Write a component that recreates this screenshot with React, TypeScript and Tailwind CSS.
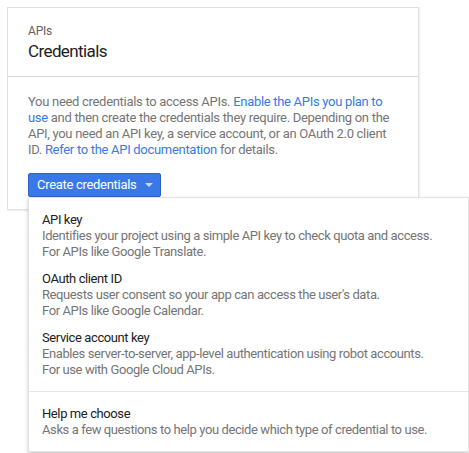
import React from "react";

const items = [
  {
    title: "API key",
    lines: [
      "Identifies your project using a simple API key to check quota and access.",
      "For APIs like Google Translate.",
    ],
  },
  {
    title: "OAuth client ID",
    lines: [
      "Requests user consent so your app can access the user's data.",
      "For APIs like Google Calendar.",
    ],
  },
  {
    title: "Service account key",
    lines: [
      "Enables server-to-server, app-level authentication using robot accounts.",
      "For use with Google Cloud APIs.",
    ],
  },
];

function MenuItem({ title, lines }: { title: string; lines: string[] }) {
  return (
    <div className="px-[13px] py-[5px] cursor-pointer whitespace-nowrap tracking-[-0.4px]">
      <div className="text-[13px] leading-[17px] text-[#212121]">{title}</div>
      {lines.map((l) => (
        <div key={l} className="text-[13px] leading-4 text-[#757575]">
          {l}
        </div>
      ))}
    </div>
  );
}

export default function App() {
  return (
    <div
      className="relative w-[469px] h-[453px] bg-white pt-[7px] pl-[7px]"
      style={{ fontFamily: "Roboto, 'Noto Sans', Arial, sans-serif" }}
    >
      <div className="w-[412px] border border-[#e0e0e0] bg-white shadow-[1px_1px_2px_rgba(0,0,0,0.08)]">
        <div className="h-[69px] border-b border-[#dadada] px-5 pt-[15px]">
          <div className="text-[12px] leading-4 text-[#616161] tracking-[-0.2px]">APIs</div>
          <div className="text-[17px] leading-6 text-[#212121] tracking-[-0.6px]">Credentials</div>
        </div>
        <div className="px-5 pt-[17px] pb-3">
          <p className="text-[13px] leading-4 text-[#757575] tracking-[-0.3px] pr-[4px]">
            You need credentials to access APIs.{" "}
            <a className="text-[#3b78e7]">Enable the APIs you plan to use</a> and then create the
            credentials they require. Depending on the API, you need an API key, a service
            account, or an OAuth 2.0 client ID.{" "}
            <a className="text-[#3b78e7]">Refer to the API documentation</a> for details.
          </p>
          <div className="relative mt-[15px]">
            <button className="flex items-center h-6 w-[133px] pl-2 bg-[#3b78e7] border border-[#2f62c9] rounded-[2px] text-white text-[13px] tracking-[-0.3px]">
              Create credentials
              <svg width="8" height="4" viewBox="0 0 8 4" className="ml-[9px]">
                <path d="M0 0h8L4 4z" fill="#c8d9fa" />
              </svg>
            </button>
            <div className="absolute left-0 top-full z-10 w-[441px] bg-white border border-[#e3e3e3] shadow-[0_2px_4px_rgba(0,0,0,0.2)]">
              <div className="py-2">
                {items.map((it) => (
                  <MenuItem key={it.title} title={it.title} lines={it.lines} />
                ))}
              </div>
              <div className="border-t border-[#e6e6e6] py-2">
                <MenuItem
                  title="Help me choose"
                  lines={["Asks a few questions to help you decide which type of credential to use."]}
                />
              </div>
            </div>
          </div>
        </div>
      </div>
    </div>
  );
}
